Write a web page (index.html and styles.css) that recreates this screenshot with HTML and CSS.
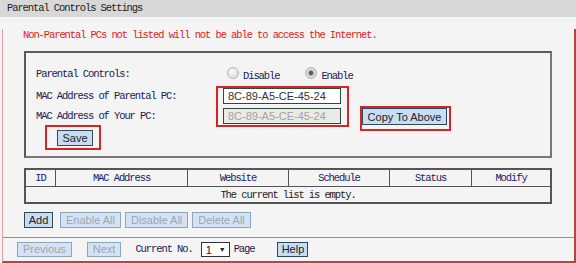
FILE: index.html
```html
<!DOCTYPE html>
<html lang="en">
<head>
    <meta charset="UTF-8">
    <meta name="viewport" content="width=device-width, initial-scale=1.0">
    <title>Parental Controls Settings</title>
    <link rel="stylesheet" href="styles.css">
</head>
<body>
    <div class="title">Parental Controls Settings</div>
    <div class="panel">
        <p class="notice">Non-Parental PCs not listed will not be able to access the Internet.</p>

        <div class="box">
            <div class="mode-row">
                <span class="label">Parental Controls:</span>
                <span class="radio"></span><span class="opt">Disable</span>
                <span class="radio checked"></span><span class="opt">Enable</span>
            </div>
            <div class="mac-rows">
                <div class="labels">
                    <span class="label">MAC Address of Parental PC:</span>
                    <span class="label">MAC Address of Your PC:</span>
                    <div class="mark save-mark"><button class="btn">Save</button></div>
                </div>
                <div class="mark input-mark">
                    <input class="field" type="text" value="8C-89-A5-CE-45-24">
                    <input class="field" type="text" value="8C-89-A5-CE-45-24" disabled>
                </div>
                <div class="mark copy-mark"><button class="btn copy">Copy To Above</button></div>
            </div>
        </div>

        <table class="list">
            <tr>
                <th class="c-id">ID</th>
                <th class="c-mac">MAC Address</th>
                <th class="c-web">Website</th>
                <th class="c-sch">Schedule</th>
                <th class="c-st">Status</th>
                <th>Modify</th>
            </tr>
            <tr>
                <td colspan="6">The current list is empty.</td>
            </tr>
        </table>

        <div class="actions">
            <button class="btn add">Add</button>
            <button class="btn" disabled>Enable All</button>
            <button class="btn" disabled>Disable All</button>
            <button class="btn" disabled>Delete All</button>
        </div>

        <div class="footer">
            <button class="btn" disabled>Previous</button>
            <button class="btn next" disabled>Next</button>
            <span class="cur">Current No.</span>
            <span class="select">1<span class="arrow">&#9660;</span></span>
            <span class="page">Page</span>
            <button class="btn help">Help</button>
        </div>
    </div>
</body>
</html>
```

FILE: styles.css
```css
body {
    margin: 0;
    background-color: #f4f4f4;
    font-family: "Liberation Mono", monospace;
    font-size: 10.5px;
    letter-spacing: -1.1px;
    color: #1c1c4a;
}
.title {
    height: 17px;
    line-height: 17px;
    padding-left: 7px;
    background-color: #d8d8d8;
    color: #222;
}
.panel {
    margin-left: 2px;
    border-left: 1px solid #e3a2a2;
    border-right: 2px solid #b94444;
    border-bottom: 2px solid #b94444;
}
.notice {
    margin: 12px 0 10px 20px;
    line-height: 12px;
    color: #e41a1a;
}
.box {
    margin-left: 21px;
    width: 528px;
    box-sizing: border-box;
    border: 2px solid #5a5a5a;
    border-right-color: #777;
    border-bottom-color: #777;
    padding: 13px 0 6px 10px;
}
.mode-row {
    display: flex;
    align-items: center;
    height: 16px;
    margin-bottom: 4px;
}
.label {
    display: block;
    width: 180px;
    height: 17px;
    line-height: 17px;
    color: #1a1a55;
}
.mode-row .label {
    height: 16px;
    line-height: 16px;
}
.radio {
    width: 10px;
    height: 10px;
    border-radius: 50%;
    border: 1px solid #b5b5b5;
    background: radial-gradient(circle at 40% 35%, #fafafa, #d4d4d4);
    margin-left: 11px;
    margin-top: -3px;
}
.radio.checked {
    margin-left: 26px;
    background: radial-gradient(circle, #555 0, #666 2px, #dcdcdc 3px, #cfcfcf);
}
.opt {
    margin-left: 4px;
    margin-top: 3px;
    color: #1a1a55;
}
.mac-rows {
    display: flex;
    align-items: flex-start;
}
.labels {
    width: 180px;
    padding-top: 2px;
}
.labels .label + .label {
    margin-top: 3px;
}
.mark {
    border: 2px solid #d42424;
}
.save-mark {
    width: fit-content;
    margin-left: 9px;
    padding: 3px 6px 2px 10px;
}
.input-mark {
    display: flex;
    flex-direction: column;
    gap: 4px;
    padding: 0 6px 1px 5px;
}
.field {
    width: 118px;
    height: 16px;
    box-sizing: border-box;
    margin: 0;
    padding: 0 0 0 4px;
    border: 1px solid #2e4a3c;
    background-color: #fff;
    font-family: "Liberation Sans", Arial, sans-serif;
    font-size: 11px;
    letter-spacing: 0;
    color: #333;
}
.field:disabled {
    background-color: #ebebe6;
    color: #a2a2a2;
}
.copy-mark {
    margin: 20px 0 0 11px;
    padding: 0 2px 4px 0;
}
.btn {
    display: block;
    height: 16px;
    margin: 0;
    padding: 0 5px;
    border: 1px solid #2c4a58;
    background-color: #c8ddf3;
    font-family: "Liberation Sans", Arial, sans-serif;
    font-size: 11px;
    letter-spacing: 0;
    line-height: 14px;
    white-space: nowrap;
    color: #222;
}
.btn:disabled {
    border-color: #8ea5b8;
    background-color: #d3e3f3;
    color: #9aa6b4;
}
.save-mark .btn {
    width: 36px;
    padding: 0;
}
.copy {
    width: 85px;
    height: 17px;
    padding: 0;
}
.list {
    margin: 10px 0 0 21px;
    width: 528px;
    border-collapse: collapse;
    border: 2px solid #555;
}
.list th, .list td {
    border: 1px solid #555;
    padding: 0;
    text-align: center;
    font-weight: normal;
    line-height: 12px;
}
.list th {
    height: 16px;
    color: #1a1a66;
}
.list td {
    height: 15px;
    color: #222;
}
.c-id { width: 29px; }
.c-mac { width: 131px; }
.c-web { width: 100px; }
.c-sch { width: 100px; }
.c-st { width: 81px; }
.actions {
    display: flex;
    align-items: flex-start;
    gap: 4px;
    height: 16px;
    margin: 8px 0 9px 21px;
}
.actions .add {
    width: 29px;
    padding: 0;
    margin-right: 3px;
}
.footer {
    display: flex;
    align-items: flex-start;
    box-sizing: border-box;
    height: 24px;
    padding: 4px 0 0 14px;
    border-top: 1px solid #d67474;
}
.footer .btn {
    height: 15px;
    line-height: 13px;
}
.next {
    margin-left: 15px;
}
.cur {
    margin-left: 14px;
    line-height: 15px;
    color: #1a1a55;
}
.select {
    display: flex;
    align-items: center;
    justify-content: space-between;
    width: 29px;
    height: 15px;
    box-sizing: border-box;
    margin-left: 8px;
    padding: 0 3px 0 4px;
    border: 1px solid #333;
    background-color: #fff;
    font-family: "Liberation Sans", Arial, sans-serif;
    font-size: 11px;
    letter-spacing: 0;
    color: #222;
}
.arrow {
    font-size: 7px;
}
.page {
    margin-left: 4px;
    line-height: 15px;
    color: #1a1a55;
}
.help {
    margin-left: 23px;
    width: 31px;
    padding: 0;
}
```
